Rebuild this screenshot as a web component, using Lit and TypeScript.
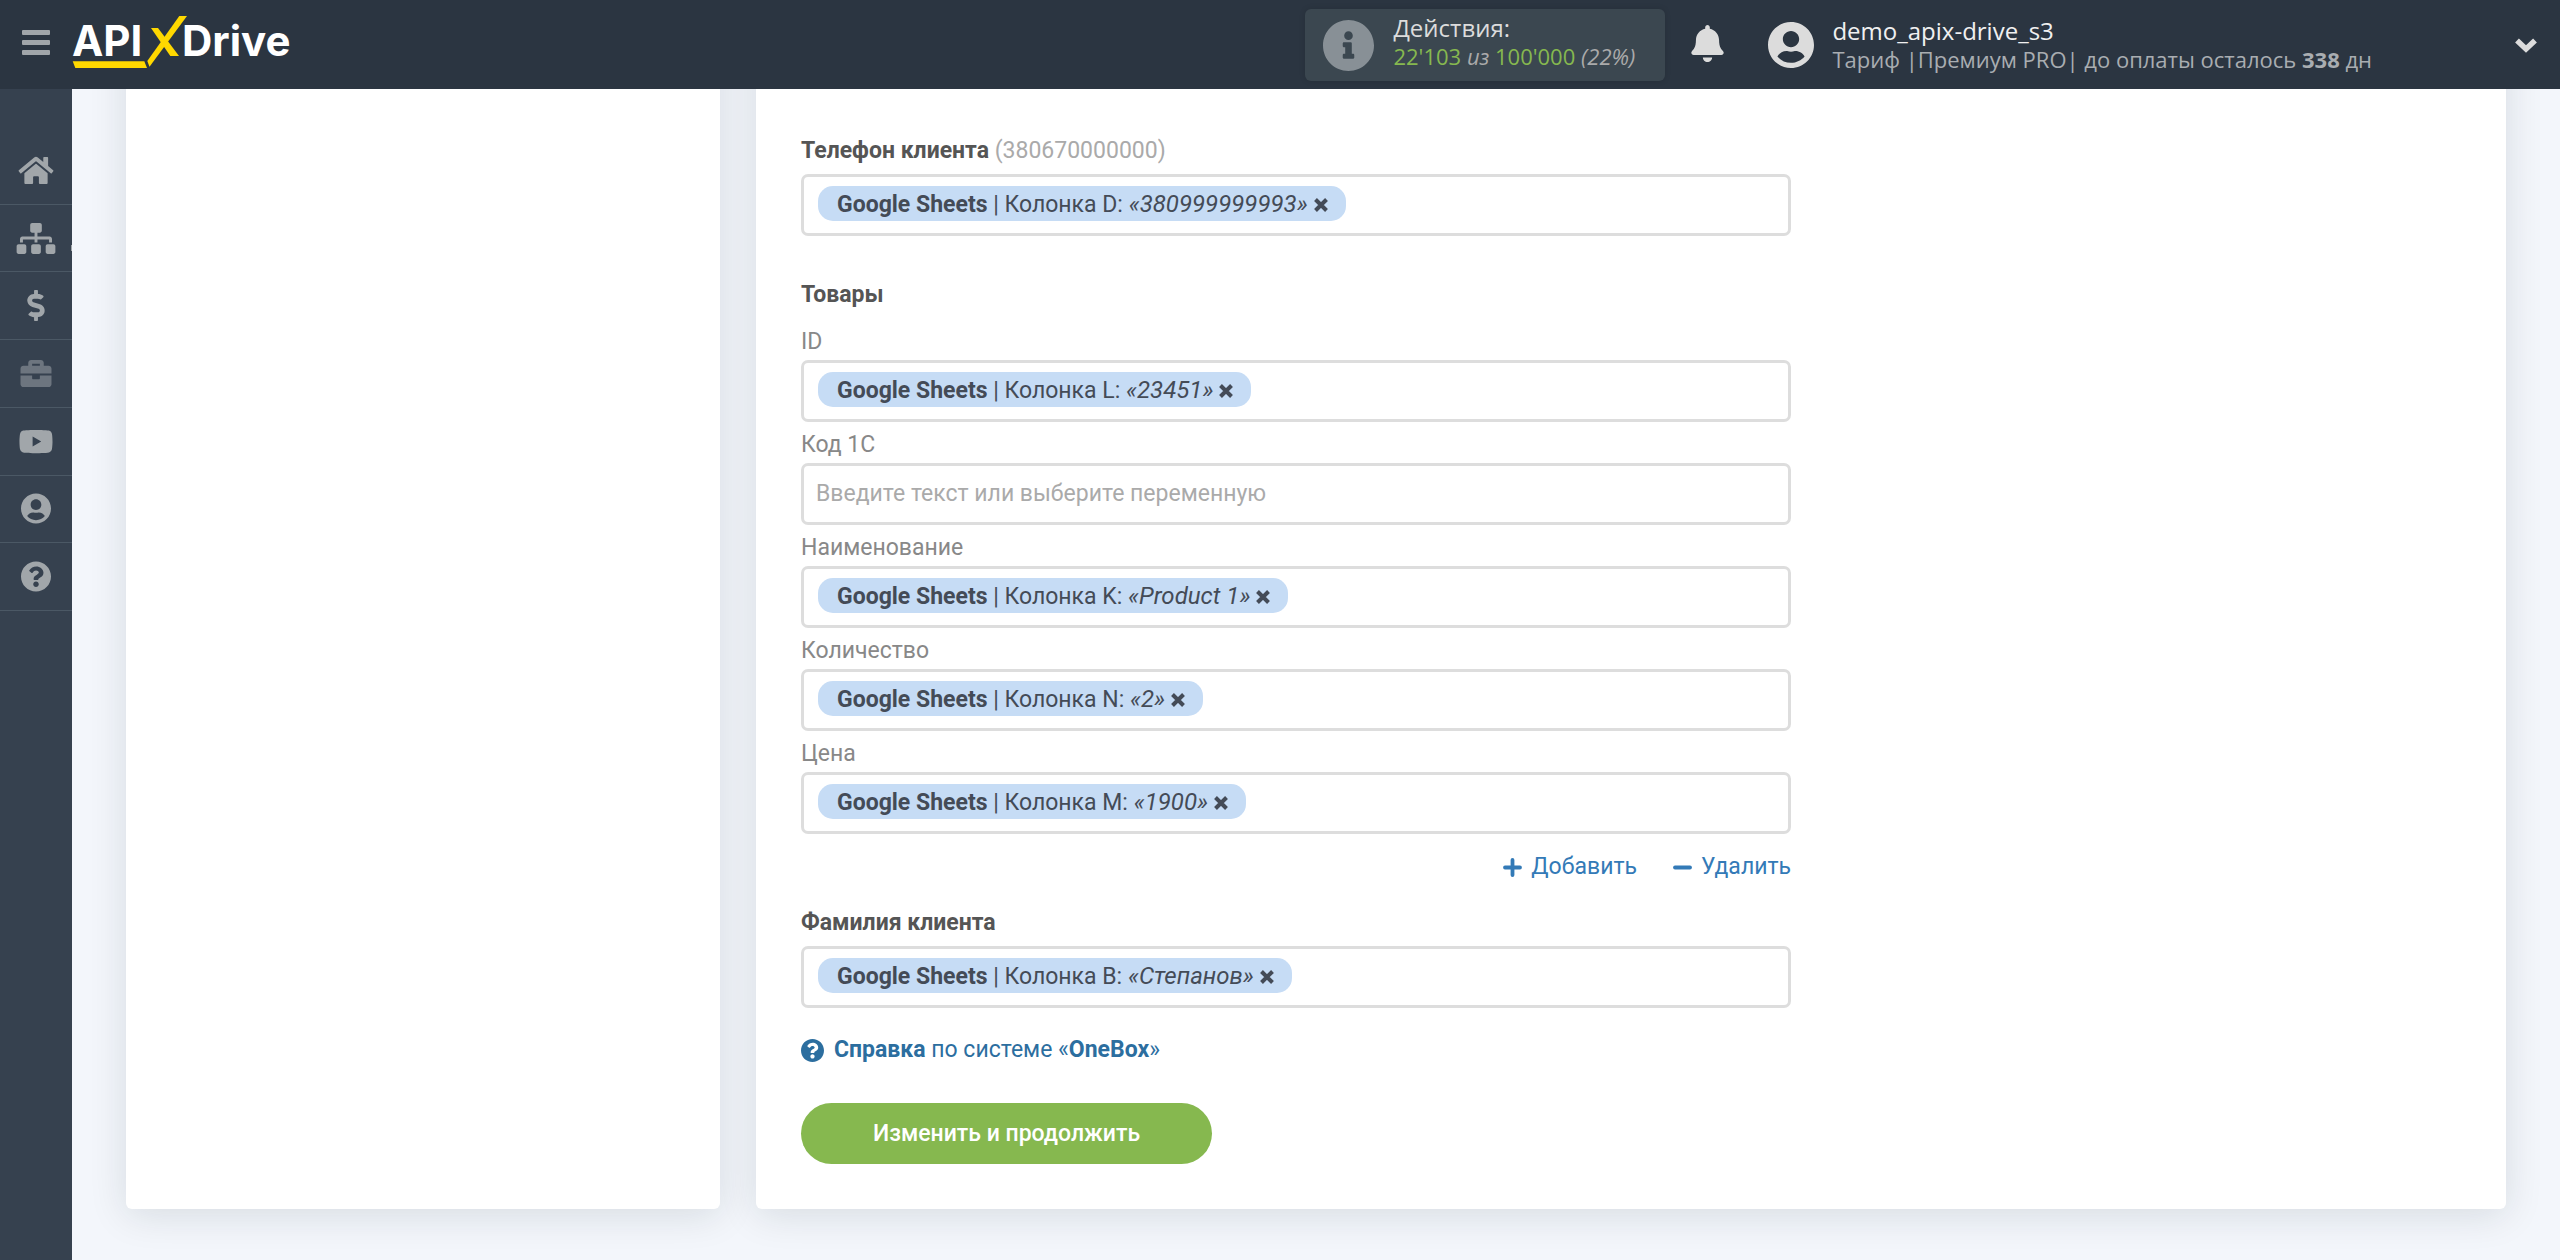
import { LitElement, html, css, svg, nothing } from "lit";
import { customElement, property } from "lit/decorators.js";

interface Glyph {
  box: string;
  d: string;
}

const GLYPHS: Record<string, Glyph> = {
  home: {
    box: "0 0 576 512",
    d: "M280.37 148.26L96 300.11V464a16 16 0 0 0 16 16l112.06-.29a16 16 0 0 0 15.92-16V368a16 16 0 0 1 16-16h64a16 16 0 0 1 16 16v95.64a16 16 0 0 0 16 16.05L464 480a16 16 0 0 0 16-16V300L295.67 148.26a12.19 12.19 0 0 0-15.3 0zM571.6 251.47L488 182.56V44.05a12 12 0 0 0-12-12h-56a12 12 0 0 0-12 12v72.61L318.47 43a48 48 0 0 0-61 0L4.34 251.47a12 12 0 0 0-1.6 16.9l25.5 31A12 12 0 0 0 45.15 301l235.22-193.74a12.19 12.19 0 0 1 15.3 0L530.9 301a12 12 0 0 0 16.9-1.6l25.5-31a12 12 0 0 0-1.7-16.93z",
  },
  sitemap: {
    box: "0 0 640 512",
    d: "M128 352H32c-17.67 0-32 14.33-32 32v96c0 17.67 14.33 32 32 32h96c17.67 0 32-14.33 32-32v-96c0-17.67-14.33-32-32-32zm-24-80h192v48h48v-48h192v48h48v-57.59c0-21.17-17.23-38.41-38.41-38.41H344v-64h40c17.67 0 32-14.33 32-32V32c0-17.67-14.33-32-32-32H256c-17.67 0-32 14.33-32 32v96c0 17.67 14.33 32 32 32h40v64H94.41C73.23 224 56 241.23 56 262.41V320h48v-48zm264 80h-96c-17.67 0-32 14.33-32 32v96c0 17.67 14.33 32 32 32h96c17.67 0 32-14.33 32-32v-96c0-17.67-14.33-32-32-32zm240 0h-96c-17.67 0-32 14.33-32 32v96c0 17.67 14.33 32 32 32h96c17.67 0 32-14.33 32-32v-96c0-17.67-14.33-32-32-32z",
  },
  dollar: {
    box: "0 0 288 512",
    d: "M209.2 233.4l-108-31.6C88.7 198.2 80 186.5 80 173.5c0-16.3 13.2-29.5 29.5-29.5h66.3c12.2 0 24.2 3.7 34.2 10.5 6.1 4.1 14.3 3.1 19.5-2l34.8-34c7.1-6.9 6.1-18.4-1.8-24.5C238 74.8 207.4 64.1 176 64V16c0-8.8-7.2-16-16-16h-32c-8.8 0-16 7.2-16 16v48h-2.5C45.8 64-5.4 118.7.5 183.6c4.2 46.1 39.4 83.6 83.8 96.6l102.5 30c12.5 3.7 21.2 15.3 21.2 28.3 0 16.3-13.2 29.5-29.5 29.5h-66.3C100 368 88 364.3 78 357.5c-6.1-4.1-14.3-3.1-19.5 2l-34.8 34c-7.1 6.9-6.1 18.4 1.8 24.5 24.5 19.2 55.1 29.9 86.5 30v48c0 8.8 7.2 16 16 16h32c8.8 0 16-7.2 16-16v-48.2c46.6-.9 90.3-28.6 105.7-72.7 21.5-61.6-14.6-124.8-72.5-141.7z",
  },
  briefcase: {
    box: "0 0 512 512",
    d: "M320 336c0 8.84-7.16 16-16 16h-96c-8.84 0-16-7.16-16-16v-48H0v144c0 25.6 22.4 48 48 48h416c25.6 0 48-22.4 48-48V288H320v48zm144-208h-80V80c0-25.6-22.4-48-48-48H176c-25.6 0-48 22.4-48 48v48H48c-25.6 0-48 22.4-48 48v80h512v-80c0-25.6-22.4-48-48-48zm-144 0H192V96h128v32z",
  },
  youtube: {
    box: "0 0 576 512",
    d: "M549.655 124.083c-6.281-23.65-24.787-42.276-48.284-48.597C458.781 64 288 64 288 64S117.22 64 74.629 75.486c-23.497 6.322-42.003 24.947-48.284 48.597-11.412 42.867-11.412 132.305-11.412 132.305s0 89.438 11.412 132.305c6.281 23.65 24.787 41.5 48.284 47.821C117.22 448 288 448 288 448s170.78 0 213.371-11.486c23.497-6.321 42.003-24.171 48.284-47.821 11.412-42.867 11.412-132.305 11.412-132.305s0-89.438-11.412-132.305zm-317.51 213.508V175.185l142.739 81.205-142.739 81.201z",
  },
  user: {
    box: "0 0 496 512",
    d: "M248 8C111 8 0 119 0 256s111 248 248 248 248-111 248-248S385 8 248 8zm0 96c48.6 0 88 39.4 88 88s-39.4 88-88 88-88-39.4-88-88 39.4-88 88-88zm0 344c-58.7 0-111.3-26.6-146.5-68.2 18.8-35.4 55.6-59.8 98.5-59.8 2.4 0 4.8.4 7.1 1.1 13 4.2 26.6 6.9 40.9 6.9 14.3 0 28-2.7 40.9-6.9 2.3-.7 4.7-1.1 7.1-1.1 42.9 0 79.7 24.4 98.5 59.8C359.3 421.4 306.7 448 248 448z",
  },
  question: {
    box: "8 0 496 512",
    d: "M504 256c0 136.997-111.043 248-248 248S8 392.997 8 256C8 119.083 119.043 8 256 8s248 111.083 248 248zM262.655 90c-54.497 0-89.255 22.957-116.549 63.758-3.536 5.286-2.353 12.415 2.715 16.258l34.699 26.31c5.205 3.947 12.621 3.008 16.665-2.122 17.864-22.658 30.113-35.797 57.303-35.797 20.429 0 45.698 13.148 45.698 32.958 0 14.976-12.363 22.667-32.534 33.976C247.128 238.528 216 254.941 216 296v4c0 6.627 5.373 12 12 12h56c6.627 0 12-5.373 12-12v-1.333c0-28.462 83.186-29.647 83.186-106.667 0-58.002-60.165-102-116.531-102zM256 338c-25.365 0-46 20.635-46 46 0 25.364 20.635 46 46 46s46-20.636 46-46c0-25.365-20.635-46-46-46z",
  },
  info: {
    box: "8 8 496 496",
    d: "M256 8C119.043 8 8 119.083 8 256c0 136.997 111.043 248 248 248s248-111.003 248-248C504 119.083 392.957 8 256 8zm0 110c23.196 0 42 18.804 42 42s-18.804 42-42 42-42-18.804-42-42 18.804-42 42-42zm56 254c0 6.627-5.373 12-12 12h-88c-6.627 0-12-5.373-12-12v-24c0-6.627 5.373-12 12-12h12v-64h-12c-6.627 0-12-5.373-12-12v-24c0-6.627 5.373-12 12-12h64c6.627 0 12 5.373 12 12v100h12c6.627 0 12 5.373 12 12v24z",
  },
  bell: {
    box: "0 0 448 512",
    d: "M224 512c35.32 0 63.97-28.65 63.97-64H160.03c0 35.35 28.65 64 63.97 64zm215.39-149.71c-19.32-20.76-55.47-51.99-55.47-154.29 0-77.7-54.48-139.9-127.94-155.16V32c0-17.67-14.32-32-31.98-32s-31.98 14.33-31.98 32v20.84C118.56 68.1 64.08 130.3 64.08 208c0 102.3-36.15 133.53-55.47 154.29-6 6.45-8.66 14.16-8.61 21.71.11 16.4 12.98 32 32.1 32h383.8c19.12 0 32-15.6 32.1-32 .05-7.55-2.61-15.27-8.61-21.71z",
  },
};

const glyph = (name: string) => {
  const g = GLYPHS[name];
  return html`<svg class="glyph" viewBox=${g.box} aria-hidden="true">${svg`<path d=${g.d} fill="currentColor"/>`}</svg>`;
};

const shared = css`
  *,
  *::before,
  *::after {
    box-sizing: border-box;
  }
  .glyph {
    display: block;
    width: 100%;
    height: 100%;
  }
  button {
    border: 0;
    padding: 0;
    margin: 0;
    background: none;
    font: inherit;
    color: inherit;
    cursor: pointer;
  }
  a {
    color: inherit;
    text-decoration: none;
  }
`;

@customElement("top-bar")
export class TopBar extends LitElement {
  static styles = [
    shared,
    css`
      :host {
        display: flex;
        align-items: center;
        height: 89px;
        background: #2b3541;
        color: #dcdcdc;
        font: 22px/28px "Open Sans", "Noto Sans", sans-serif;
        position: relative;
        z-index: 2;
      }
      .menu {
        display: flex;
        flex-direction: column;
        gap: 5px;
        width: 28px;
        margin: 0 22px 4px;
      }
      .bar {
        height: 5px;
        border-radius: 1px;
        background: #a0a5a9;
      }
      .logo {
        flex: none;
        width: 226px;
        height: 89px;
      }
      .logo svg {
        display: block;
      }
      .logo text {
        font: 700 42px Inter, "Liberation Sans", sans-serif;
        fill: #fff;
      }
      .actions {
        display: flex;
        align-items: flex-start;
        gap: 19px;
        width: 360px;
        height: 72px;
        margin-left: auto;
        padding: 5px 18px;
        border-radius: 6px;
        background: #3b4750;
        box-shadow: 0 0 6px rgba(0, 0, 0, 0.12);
      }
      .info {
        width: 51px;
        height: 51px;
        margin-top: 6px;
        color: #889096;
        flex: none;
      }
      .lines {
        white-space: nowrap;
      }
      .lines p {
        margin: 0;
      }
      .lines .lead {
        font-size: 24px;
      }
      .count {
        color: #aaa;
      }
      .num {
        color: #86b84f;
      }
      .bell {
        width: 33px;
        height: 37px;
        margin: 0 0 2px 26px;
      }
      .account {
        display: flex;
        align-items: center;
        gap: 18px;
        margin-left: 44px;
      }
      .avatar {
        width: 46px;
        height: 48px;
      }
      .name {
        color: #f0f0f0;
      }
      .plan {
        color: #a9adb1;
      }
      .more {
        width: 24px;
        height: 16px;
        margin: 0 22px 0 142px;
      }
      .more svg {
        display: block;
      }
    `,
  ];

  render() {
    return html`
      <button class="menu" aria-label="Меню">
        <span class="bar"></span><span class="bar"></span><span class="bar"></span>
      </button>
      <a class="logo" href="#" aria-label="APIXDrive">
        <svg width="226" height="89" viewBox="72 0 226 89">
          <text x="72" y="56">API</text>
          <text x="182" y="56">Drive</text>
          <path d="M72.7 61.2H144.3L147 68H75.3Z" fill="#ffd800" />
          <path d="M151 28H158L179 56H170.3Z" fill="#ffd800" />
          <path d="M179.3 16H187L149.5 66.7L147.3 61Z" fill="#ffd800" />
        </svg>
      </a>
      <div class="actions">
        <span class="info">${glyph("info")}</span>
        <div class="lines">
          <p class="lead">Действия:</p>
          <p class="count">
            <span class="num">22'103</span> <i>из</i> <span class="num">100'000</span> <i>(22%)</i>
          </p>
        </div>
      </div>
      <button class="bell" aria-label="Уведомления">${glyph("bell")}</button>
      <div class="account">
        <span class="avatar">${glyph("user")}</span>
        <div class="lines">
          <p class="lead name">demo_apix-drive_s3</p>
          <p class="plan">Тариф |Премиум PRO| до оплаты осталось <b>338</b> дн</p>
        </div>
      </div>
      <button class="more" aria-label="Ещё">
        <svg width="24" height="16" viewBox="0 0 24 16">
          <path
            d="M3 3.5L12 12L21 3.5"
            fill="none"
            stroke="currentColor"
            stroke-width="5.5"
            stroke-linejoin="miter"
          />
        </svg>
      </button>
    `;
  }
}

@customElement("side-nav")
export class SideNav extends LitElement {
  static styles = [
    shared,
    css`
      :host {
        display: block;
        width: 72px;
        flex: none;
        background: #36414f;
        padding-top: 48px;
        position: relative;
        z-index: 1;
      }
      .list {
        display: grid;
        grid-auto-rows: 1fr;
        height: 474px;
        margin: 0;
        padding: 0;
        list-style: none;
      }
      .item {
        border-bottom: 1px solid #4b5865;
        position: relative;
      }
      .link {
        display: grid;
        place-items: center;
        height: 100%;
        color: #a1a6aa;
      }
      .icon {
        width: 40px;
        height: 31px;
      }
      .dim {
        color: #6d757f;
      }
      .current::after {
        content: "";
        position: absolute;
        right: 0;
        top: 40px;
        width: 1px;
        height: 6px;
        background: #a1a6aa;
      }
    `,
  ];

  render() {
    const items = [
      ["home", "Главная", ""],
      ["sitemap", "Связи", "current"],
      ["dollar", "Оплата", ""],
      ["briefcase", "Проекты", "dim"],
      ["youtube", "Видео", ""],
      ["user", "Профиль", ""],
      ["question", "Помощь", ""],
    ];
    return html`<nav>
      <ul class="list">
        ${items.map(
          ([icon, title, mod]) => html`<li class="item ${mod === "current" ? mod : ""}">
            <a class="link ${mod === "dim" ? mod : ""}" href="#" aria-label=${title}>
              <span class="icon">${glyph(icon)}</span>
            </a>
          </li>`,
        )}
      </ul>
    </nav>`;
  }
}

@customElement("variable-field")
export class VariableField extends LitElement {
  @property() label = "";
  @property() hint = "";
  @property() column = "";
  @property() value = "";
  @property({ type: Boolean }) strong = false;

  static styles = [
    shared,
    css`
      :host {
        display: block;
      }
      .label {
        display: block;
        line-height: 30px;
        margin-bottom: 3px;
        color: #888;
      }
      .strong {
        margin-bottom: 8px;
        color: #aaa;
      }
      .strong b {
        color: #555;
      }
      .box {
        display: flex;
        align-items: flex-start;
        height: 62px;
        padding: 9px 12px 0;
        border: 3px solid #ddd;
        border-radius: 7px;
        background: #fff;
      }
      .chip {
        display: flex;
        align-items: center;
        flex: none;
        height: 35px;
        margin-left: 2px;
        padding: 2px 17px 0 19px;
        border-radius: 15px;
        background: #c6dcf5;
        color: #444b57;
        white-space: nowrap;
      }
      .value {
        font-size: 24px;
      }
      .remove {
        width: 16px;
        height: 16px;
        margin-left: 5px;
      }
      .remove svg {
        display: block;
      }
      .input {
        flex: 1;
        min-width: 0;
        height: 36px;
        border: 0;
        padding: 0;
        outline: 0;
        background: none;
        font: inherit;
        color: #444b57;
      }
      .input::placeholder {
        color: #aaa;
        opacity: 1;
      }
    `,
  ];

  render() {
    return html`
      <label class="label ${this.strong ? "strong" : ""}" for="field"
        >${this.strong ? html`<b>${this.label}</b>` : this.label}${this.hint ? ` (${this.hint})` : nothing}</label
      >
      <div class="box">
        ${this.column
          ? html`<span class="chip"
              ><span><b>Google Sheets</b> | Колонка ${this.column}: <i class="value">«${this.value}»</i></span
              ><button class="remove" type="button" aria-label="Убрать">
                <svg width="16" height="16" viewBox="0 0 16 16">
                  <path d="M2.5 2.5L13.5 13.5M13.5 2.5L2.5 13.5" stroke="currentColor" stroke-width="4" />
                </svg></button
            ></span>`
          : nothing}
        <input
          class="input"
          id="field"
          type="text"
          placeholder=${this.column ? nothing : "Введите текст или выберите переменную"}
        />
      </div>
    `;
  }
}

@customElement("app-root")
export class AppRoot extends LitElement {
  static styles = [
    shared,
    css`
      :host {
        display: flex;
        flex-direction: column;
        min-height: 100vh;
        background: #f3f6fb;
        font: 23px/30px Roboto, "Liberation Sans", sans-serif;
        color: #555;
      }
      .body {
        display: flex;
        flex: 1;
        overflow: hidden;
      }
      .main {
        display: grid;
        grid-template-columns: minmax(0, 594fr) minmax(0, 1750fr);
        gap: 36px;
        flex: 1;
        align-self: flex-start;
        margin-top: -60px;
        padding: 0 54px 51px;
      }
      .card {
        padding: 107px 45px 45px;
        border-radius: 6px;
        background: #fff;
        box-shadow: 0 6px 38px rgba(20, 30, 40, 0.12);
      }
      .form {
        max-width: 990px;
      }
      .title {
        margin: 44px 0 17px;
        font: inherit;
        font-weight: 700;
      }
      .group {
        display: grid;
        gap: 8px;
      }
      .tools {
        display: flex;
        justify-content: flex-end;
        gap: 36px;
        margin: 18px 0 26px;
        color: #337ab7;
      }
      .tool {
        display: flex;
        align-items: center;
        gap: 9px;
      }
      .help {
        display: flex;
        align-items: center;
        gap: 10px;
        margin: 27px 0 38px;
        color: #2c6e9f;
      }
      .mark {
        width: 23px;
        height: 25px;
      }
      .submit {
        display: block;
        height: 61px;
        padding: 0 72px;
        border-radius: 31px;
        background: #86b84f;
        color: #fff;
        font-weight: 500;
      }
    `,
  ];

  render() {
    const product = [
      ["ID", "L", "23451"],
      ["Код 1С", "", ""],
      ["Наименование", "K", "Product 1"],
      ["Количество", "N", "2"],
      ["Цена", "M", "1900"],
    ];
    return html`
      <top-bar></top-bar>
      <div class="body">
        <side-nav></side-nav>
        <main class="main">
          <section class="card"></section>
          <section class="card">
            <form class="form" @submit=${(e: Event) => e.preventDefault()}>
              <variable-field
                strong
                label="Телефон клиента"
                hint="380670000000"
                column="D"
                value="380999999993"
              ></variable-field>
              <h2 class="title">Товары</h2>
              <div class="group">
                ${product.map(
                  ([label, column, value]) =>
                    html`<variable-field label=${label} column=${column} value=${value}></variable-field>`,
                )}
              </div>
              <div class="tools">
                <button class="tool" type="button">
                  <svg width="19" height="19" viewBox="0 0 19 19">
                    <path d="M9.5 2V17M2 9.5H17" stroke="currentColor" stroke-width="3.8" stroke-linecap="round" />
                  </svg>
                  Добавить
                </button>
                <button class="tool" type="button">
                  <svg width="19" height="19" viewBox="0 0 19 19">
                    <path d="M2 9.5H17" stroke="currentColor" stroke-width="3.8" stroke-linecap="round" />
                  </svg>
                  Удалить
                </button>
              </div>
              <variable-field strong label="Фамилия клиента" column="B" value="Степанов"></variable-field>
              <a class="help" href="#">
                <span class="mark">${glyph("question")}</span>
                <span><b>Справка</b> по системе «<b>OneBox</b>»</span>
              </a>
              <button class="submit" type="submit">Изменить и продолжить</button>
            </form>
          </section>
        </main>
      </div>
    `;
  }
}
